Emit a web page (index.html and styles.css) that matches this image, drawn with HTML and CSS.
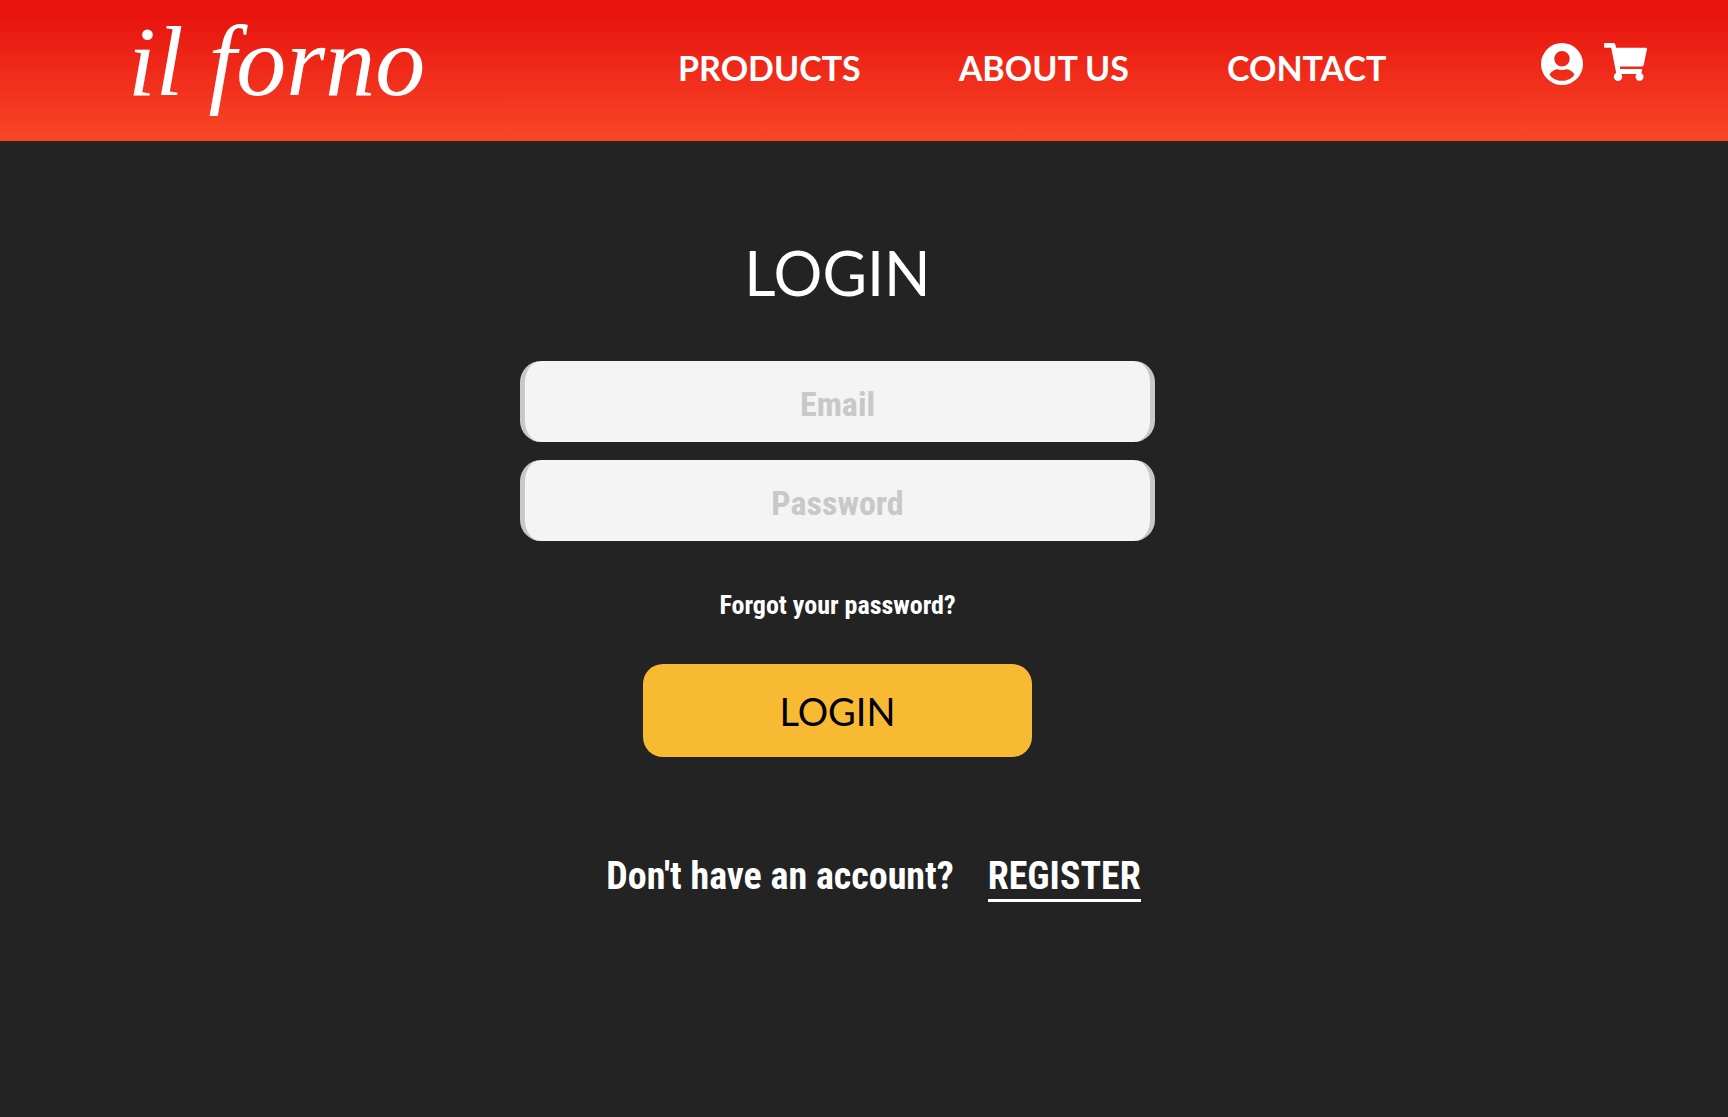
FILE: index.html
```html
<!DOCTYPE html>
<html lang="en">
<head>
<meta charset="utf-8">
<meta name="viewport" content="width=device-width, initial-scale=1">
<title>il forno</title>
<link rel="stylesheet" href="styles.css">
</head>
<body>
<header class="header">
  <a class="logo" href="#">il forno</a>
  <nav class="nav">
    <a href="#">PRODUCTS</a>
    <a href="#">ABOUT US</a>
    <a href="#">CONTACT</a>
  </nav>
  <div class="actions">
    <a href="#" aria-label="Account">
      <svg class="account" viewBox="0 0 42 42" aria-hidden="true">
        <path fill="#fff" fill-rule="evenodd" d="M21 0a21 21 0 1 1 0 42a21 21 0 1 1 0-42ZM21 8a7.700 7.700 0 1 0 0 15.400a7.700 7.700 0 1 0 0-15.400ZM8.500 31.500C11 35.500 15.600 37.800 21 37.800S31 35.500 33.500 31.500C31.500 28.200 28 26.200 25.500 26.200C24 26.200 23.300 27 21 27S18 26.200 16.500 26.200C14 26.200 10.500 28.200 8.500 31.500Z"/>
      </svg>
    </a>
    <a href="#" aria-label="Cart">
      <svg class="cart" viewBox="0 0 43 38" aria-hidden="true">
        <path fill="#fff" d="M0 1Q0 0 1 0H9.500Q11 0 11.400 1.600L12 4.700H42Q43.200 4.700 43 6L39.700 22Q39.300 23.500 37.800 23.500H15.700L16.200 26H37Q38.500 26 38 27.500L37.400 30.200A4 4 0 1 1 32.600 31H17.200A4.200 4.200 0 1 1 12.200 30L7.200 4.800H1.200Q0 4.800 0 3.600Z"/>
      </svg>
    </a>
  </div>
</header>
<main class="main">
  <h1 class="title">LOGIN</h1>
  <form class="form">
    <input class="field" type="email" placeholder="Email" aria-label="Email">
    <input class="field" type="password" placeholder="Password" aria-label="Password">
    <a class="forgot" href="#">Forgot your password?</a>
    <button class="submit" type="button">LOGIN</button>
  </form>
  <p class="signup">Don't have an account? <a href="#">REGISTER</a></p>
</main>
</body>
</html>
```

FILE: styles.css
```css
* { box-sizing: border-box; }

body {
  margin: 0;
  min-height: 100vh;
  background: #232323;
  color: #fff;
  font-family: "Roboto Condensed", "Liberation Sans Narrow", "Liberation Sans", sans-serif;
}

a { color: inherit; text-decoration: none; }

.header {
  display: grid;
  grid-template-columns: 32% 1fr auto;
  height: 141px;
  padding: 0 81px 0 128px;
  background: linear-gradient(#e8150f 12%, #f94627);
}

.logo {
  padding-top: 8px;
  font: italic 100px/108px "Liberation Serif", serif;
  white-space: nowrap;
}

.nav {
  display: flex;
  gap: 98px;
  padding: 48px 0 0 64px;
  font: bold 34px/40px Lato, sans-serif;
  white-space: nowrap;
}

.actions {
  display: flex;
  gap: 21px;
  padding-top: 43px;
}

.actions svg { display: block; }
.account { width: 42px; height: 42px; }
.cart { width: 43px; height: 38px; }

.main {
  display: flex;
  flex-direction: column;
  align-items: center;
  padding: 92px 53px 80px 0;
}

.title {
  margin: 0 0 48px;
  font: 400 61px/80px Lato, sans-serif;
}

.form {
  display: flex;
  flex-direction: column;
  align-items: center;
  gap: 18px;
  width: 635px;
  max-width: 100%;
}

.field {
  width: 100%;
  height: 81px;
  padding: 4px 20px 0;
  border: solid #c8c8c8;
  border-width: 0 5px;
  border-radius: 21px;
  background: #f4f4f4;
  font: bold 34px/48px "Roboto Condensed", "Liberation Sans Narrow", sans-serif;
  text-align: center;
}

.field::placeholder { color: #c8c8c8; opacity: 1; }

.forgot {
  margin-top: 28px;
  font-size: 26px;
  font-weight: bold;
  line-height: 36px;
}

.submit {
  width: 389px;
  height: 93px;
  margin-top: 23px;
  border: 0;
  border-radius: 20px;
  background: #f8ba33;
  color: #000;
  font: 400 38px/48px Lato, sans-serif;
}

.signup {
  display: flex;
  gap: 34px;
  margin: 96px 0 0 72px;
  font-size: 38px;
  font-weight: bold;
  line-height: 46px;
}

.signup a { border-bottom: 3px solid #fff; }
```
